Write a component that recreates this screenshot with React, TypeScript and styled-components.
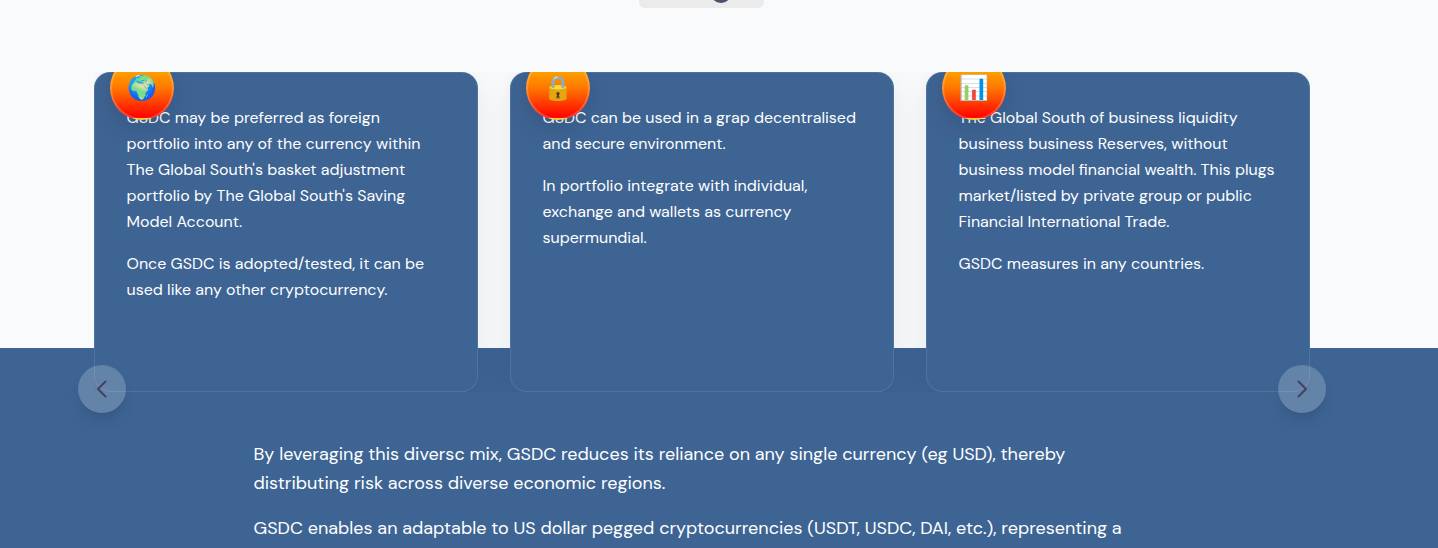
import React from "react";
import styled, { createGlobalStyle } from "styled-components";

const GlobalStyle = createGlobalStyle`
  *, *::before, *::after { box-sizing: border-box; }
  body {
    margin: 0;
    background: #3e6494;
    color: #fff;
    font-family: "DM Sans", Inter, "Liberation Sans", sans-serif;
  }
  p { margin: 0; }
`;

const Page = styled.main`
  min-height: 100vh;
  overflow: hidden;
`;

const Intro = styled.section`
  height: 348px;
  padding-right: 35px;
  background: #f8fafc;
`;

const Tag = styled.div`
  width: 125px;
  height: 8px;
  margin: 0 auto 64px;
  padding-left: 38px;
  display: flex;
  justify-content: center;
  overflow: hidden;
  background: #ebebeb;
  border-radius: 0 0 6px 6px;
`;

const Carousel = styled.div`
  position: relative;
  max-width: 1248px;
  margin: 0 auto;
  padding: 0 16px;
`;

const Track = styled.div`
  display: grid;
  grid-template-columns: repeat(3, minmax(0, 1fr));
  gap: 32px;
  overflow: hidden;
`;

const Card = styled.article`
  position: relative;
  height: 320px;
  padding: 32px;
  display: flex;
  flex-direction: column;
  gap: 16px;
  border: 1px solid rgba(255, 255, 255, 0.1);
  border-radius: 16px;
  background: #3e6494;
  box-shadow: 0 8px 32px rgba(0, 0, 0, 0.08);
  font-size: 16px;
  line-height: 26px;
  white-space: nowrap;
`;

const Badge = styled.div`
  position: absolute;
  top: -17px;
  left: 15px;
  width: 64px;
  height: 64px;
  display: flex;
  align-items: center;
  justify-content: center;
  border: 2px solid rgba(255, 255, 255, 0.2);
  border-radius: 50%;
  background: linear-gradient(180deg, #ffc000 0%, #ff7800 50%, #ff0000 100%);
  box-shadow: 0 8px 24px rgba(0, 0, 0, 0.12);
  font-size: 24px;
  line-height: 32px;
`;

const ArrowButton = styled.button<{ $side: "left" | "right" }>`
  position: absolute;
  bottom: -21px;
  ${({ $side }) => $side}: 0;
  width: 48px;
  height: 48px;
  padding: 0;
  display: grid;
  place-items: center;
  border: 0;
  border-radius: 50%;
  background: rgba(255, 255, 255, 0.2);
  color: #40455f;
  box-shadow: 0 10px 15px -3px rgba(0, 0, 0, 0.1), 0 4px 6px -4px rgba(0, 0, 0, 0.1);
  cursor: pointer;
`;

const Summary = styled.section`
  padding: 92px 35px 24px 0;
`;

const SummaryText = styled.div`
  max-width: 896px;
  margin: 0 auto;
  display: flex;
  flex-direction: column;
  gap: 16px;
  font-size: 18px;
  line-height: 29px;
  white-space: nowrap;
`;

const Chevron = ({ side }: { side: "left" | "right" }) => (
  <svg width="24" height="24" viewBox="0 0 24 24" fill="none" stroke="currentColor" strokeWidth="2" strokeLinecap="round" strokeLinejoin="round" aria-hidden="true">
    <path d={side === "left" ? "M15.5 4.5 8 12l7.5 7.5" : "M8.5 4.5 16 12l-7.5 7.5"} />
  </svg>
);

const cards = [
  {
    icon: "🌍",
    paragraphs: [
      ["GSDC may be preferred as foreign", "portfolio into any of the currency within", "The Global South's basket adjustment", "portfolio by The Global South's Saving", "Model Account."],
      ["Once GSDC is adopted/tested, it can be", "used like any other cryptocurrency."],
    ],
  },
  {
    icon: "🔒",
    paragraphs: [
      ["GSDC can be used in a grap decentralised", "and secure environment."],
      ["In portfolio integrate with individual,", "exchange and wallets as currency", "supermundial."],
    ],
  },
  {
    icon: "📊",
    paragraphs: [
      ["The Global South of business liquidity", "business business Reserves, without", "business model financial wealth. This plugs", "market/listed by private group or public", "Financial International Trade."],
      ["GSDC measures in any countries."],
    ],
  },
];

const summary = [
  ["By leveraging this diversc mix, GSDC reduces its reliance on any single currency (eg USD), thereby", "distributing risk across diverse economic regions."],
  ["GSDC enables an adaptable to US dollar pegged cryptocurrencies (USDT, USDC, DAI, etc.), representing a"],
];

const Paragraph = ({ lines }: { lines: string[] }) => (
  <p>
    {lines.map((line, i) => (
      <React.Fragment key={line}>
        {i > 0 && <br />}
        {line}
      </React.Fragment>
    ))}
  </p>
);

export default function App() {
  return (
    <>
      <GlobalStyle />
      <Page>
        <Intro>
          <Tag>
            <svg width="20" height="8" viewBox="0 0 20 8" aria-hidden="true">
              <ellipse cx="10" cy="-6" rx="10" ry="9" fill="#4a5068" />
            </svg>
          </Tag>
          <Carousel>
            <Track>
              {cards.map((card) => (
                <Card key={card.icon}>
                  {card.paragraphs.map((lines) => (
                    <Paragraph key={lines[0]} lines={lines} />
                  ))}
                  <Badge>{card.icon}</Badge>
                </Card>
              ))}
            </Track>
            <ArrowButton $side="left" aria-label="Previous">
              <Chevron side="left" />
            </ArrowButton>
            <ArrowButton $side="right" aria-label="Next">
              <Chevron side="right" />
            </ArrowButton>
          </Carousel>
        </Intro>
        <Summary>
          <SummaryText>
            {summary.map((lines) => (
              <Paragraph key={lines[0]} lines={lines} />
            ))}
          </SummaryText>
        </Summary>
      </Page>
    </>
  );
}
